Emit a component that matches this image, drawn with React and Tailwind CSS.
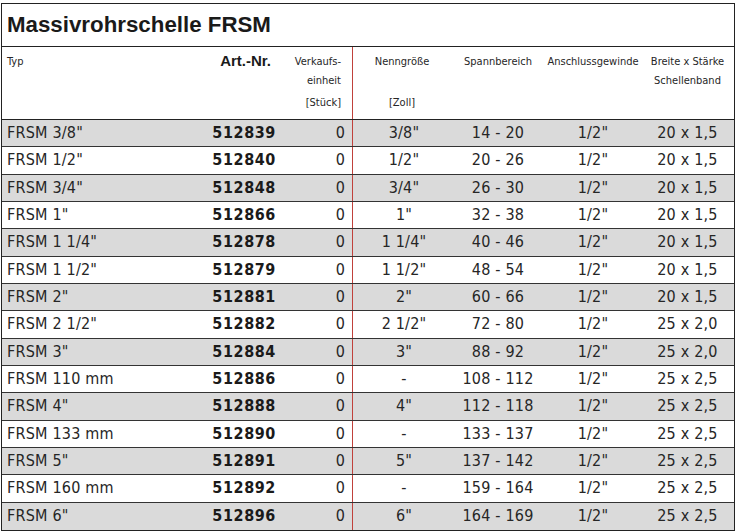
import React from "react";

const rows = [
  ["FRSM 3/8\"", "512839", "0", "3/8\"", "14 - 20", "1/2\"", "20 x 1,5"],
  ["FRSM 1/2\"", "512840", "0", "1/2\"", "20 - 26", "1/2\"", "20 x 1,5"],
  ["FRSM 3/4\"", "512848", "0", "3/4\"", "26 - 30", "1/2\"", "20 x 1,5"],
  ["FRSM 1\"", "512866", "0", "1\"", "32 - 38", "1/2\"", "20 x 1,5"],
  ["FRSM 1 1/4\"", "512878", "0", "1 1/4\"", "40 - 46", "1/2\"", "20 x 1,5"],
  ["FRSM 1 1/2\"", "512879", "0", "1 1/2\"", "48 - 54", "1/2\"", "20 x 1,5"],
  ["FRSM 2\"", "512881", "0", "2\"", "60 - 66", "1/2\"", "20 x 1,5"],
  ["FRSM 2 1/2\"", "512882", "0", "2 1/2\"", "72 - 80", "1/2\"", "25 x 2,0"],
  ["FRSM 3\"", "512884", "0", "3\"", "88 - 92", "1/2\"", "25 x 2,0"],
  ["FRSM 110 mm", "512886", "0", "-", "108 - 112", "1/2\"", "25 x 2,5"],
  ["FRSM 4\"", "512888", "0", "4\"", "112 - 118", "1/2\"", "25 x 2,5"],
  ["FRSM 133 mm", "512890", "0", "-", "133 - 137", "1/2\"", "25 x 2,5"],
  ["FRSM 5\"", "512891", "0", "5\"", "137 - 142", "1/2\"", "25 x 2,5"],
  ["FRSM 160 mm", "512892", "0", "-", "159 - 164", "1/2\"", "25 x 2,5"],
  ["FRSM 6\"", "512896", "0", "6\"", "164 - 169", "1/2\"", "25 x 2,5"],
];

const narrow = "font-['Liberation_Sans_Narrow','DejaVu_Sans_Condensed',sans-serif]";

function App() {
  return (
    <div className="bg-white w-[739px] h-[531px] pt-[3px] pl-[1px] text-[#262626]">
      <div className="w-[734px] border border-[#222]">
        <div className="h-[43px] border-b border-[#222] pl-[5px] flex items-center">
          <h1 className="font-['Liberation_Sans',sans-serif] font-bold text-[22.3px] text-[#1a1a1a]">
            Massivrohrschelle FRSM
          </h1>
        </div>
        <div className={`grid grid-cols-[199px_79px_73px_102px_86px_104px_1fr] h-[73px] border-b border-[#222] text-[11px] leading-[19px] ${narrow}`}>
          <div className="pl-[5px] pt-[5px]">Typ</div>
          <div className="text-right pr-[9px] pt-[4px] font-['Liberation_Sans',sans-serif] font-bold text-[15px] text-[#1a1a1a]">
            Art.-Nr.
          </div>
          <div className="text-right pr-[11px] pt-[5px] border-r border-[#c0413b] flex flex-col">
            <span>Verkaufs-</span>
            <span>einheit</span>
            <span className="mt-[3px]">[Stück]</span>
          </div>
          <div className="pt-[5px] flex flex-col items-center pr-[4px]">
            <span>Nenngröße</span>
            <span className="mt-[22px]">[Zoll]</span>
          </div>
          <div className="pt-[5px] text-center">Spannbereich</div>
          <div className="pt-[5px] text-center">Anschlussgewinde</div>
          <div className="pt-[5px] text-center pr-[4px]">
            <div>Breite x Stärke</div>
            <div>Schellenband</div>
          </div>
        </div>
        {rows.map((r, i) => (
          <div
            key={r[1]}
            className={`grid grid-cols-[199px_79px_73px_102px_86px_104px_1fr] h-[27.33px] items-center text-[16px] tracking-[0.2px] ${narrow} ${
              i < rows.length - 1 ? "border-b border-[#333]" : ""
            } ${i % 2 === 0 ? "bg-[#dadada]" : "bg-white"}`}
          >
            <div className="pl-[5px]">{r[0]}</div>
            <div className="text-right pr-[4px] font-bold tracking-[0.6px] text-[#1a1a1a]">{r[1]}</div>
            <div className="text-right pr-[7px] h-full flex items-center justify-end border-r border-[#c0413b]">
              {r[2]}
            </div>
            <div className="text-center">{r[3]}</div>
            <div className="text-center">{r[4]}</div>
            <div className="text-center">{r[5]}</div>
            <div className="text-center pr-[4px]">{r[6]}</div>
          </div>
        ))}
      </div>
    </div>
  );
}

export default App;
